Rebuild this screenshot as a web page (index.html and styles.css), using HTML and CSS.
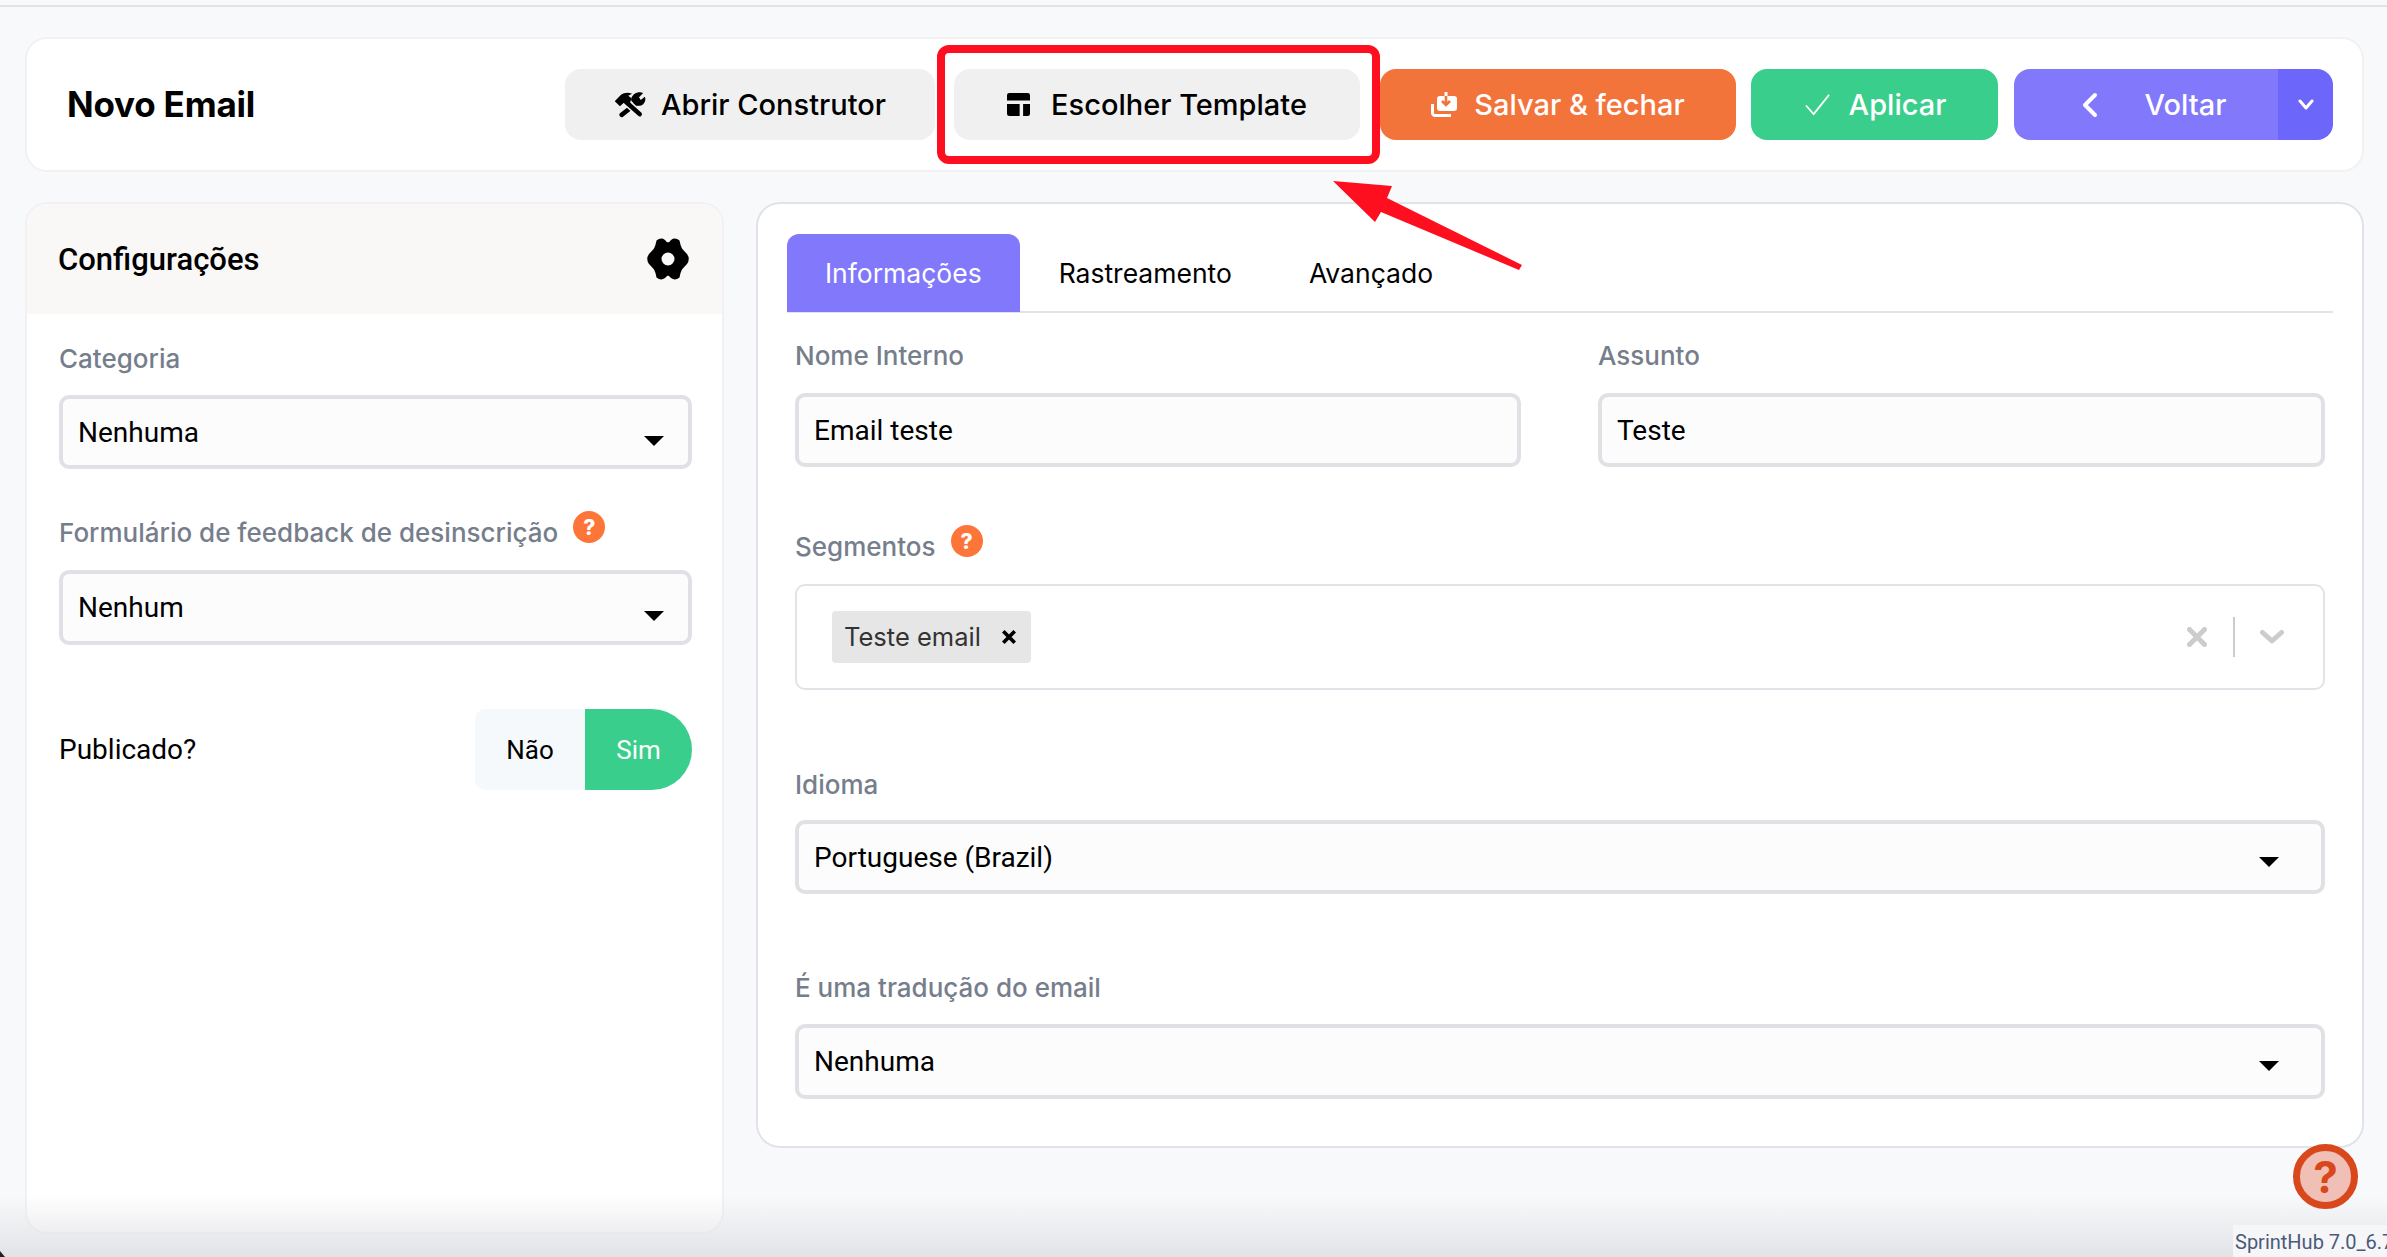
FILE: index.html
```html
<!DOCTYPE html>
<html lang="pt-BR">
<head>
<meta charset="utf-8">
<title>Novo Email</title>
<link rel="stylesheet" href="styles.css">
</head>
<body>
<div class="topline"></div>
<main class="page">
  <header class="head-card">
    <h1 class="page-title">Novo Email</h1>
    <div class="actions">
      <button class="btn btn-grey btn-build">
        <svg class="ico ico-tools" viewBox="0 0 92 75">
          <path class="t-handle-w" d="M70 28 22 66"/>
          <path class="t-head" fill-rule="evenodd" d="M66 2c8-2 13-1 18 1L72 15l5 8 12-9c3 8 1 16-5 21-6 5-14 6-21 3L50 26c-3-9 5-21 16-24z"/>
          <path class="t-gap" d="M34 28 74 64"/>
          <path class="t-handle-h" d="M34 28 74 64"/>
          <path class="t-head" d="M2 27 20 8c8-6 20-8 32-3L41 11l9 7-4 14-12-6-17 15z"/>
        </svg>
        <span>Abrir Construtor</span>
      </button>
      <button class="btn btn-grey btn-template">
        <svg class="ico ico-template" viewBox="2 2 20 20"><path d="M4 2h16a2 2 0 0 1 2 2v4.5H2V4a2 2 0 0 1 2-2z M2 11.5h11V22H4a2 2 0 0 1-2-2z M16 11.5h6V20a2 2 0 0 1-2 2h-4z"/></svg>
        <span>Escolher Template</span>
      </button>
      <button class="btn btn-orange btn-save">
        <svg class="ico ico-save" viewBox="0 0 26 25">
          <rect class="s-tray" x="6" y="4" width="20" height="15" rx="3"/>
          <path class="s-stem" d="M15 0v5"/>
          <path class="s-arrow" d="M15 4v8M11 9l4 4 4-4"/>
          <path class="s-base" d="M1.5 12v9a2.5 2.5 0 0 0 2.5 2.5h16"/>
        </svg>
        <span>Salvar &amp; fechar</span>
      </button>
      <button class="btn btn-green btn-apply">
        <svg class="ico ico-check" viewBox="0 0 26 26"><path d="M1 14l8 9L25 3"/></svg>
        <span>Aplicar</span>
      </button>
      <div class="split">
        <button class="btn btn-purple btn-back">
          <svg class="ico ico-left" viewBox="0 0 16 26"><path d="M13 3 3 13l10 10"/></svg>
          <span>Voltar</span>
        </button>
        <button class="btn-more" aria-label="Mais">
          <svg class="ico ico-down" viewBox="0 0 16 12"><path d="M2 2l6 7 6-7"/></svg>
        </button>
      </div>
    </div>
  </header>

  <div class="columns">
    <aside class="side-card">
      <div class="side-head">
        <h2 class="side-title">Configurações</h2>
        <svg class="ico-gear" viewBox="-21 -21 42 42"><path fill-rule="evenodd" d="M0 -16.500Q1.500 -17 3 -19Q7 -22 11.500 -18.500Q12.500 -13 14 -10.500Q16 -8 19 -5Q22.500 0 19 5Q16 8 14 10.500Q12.500 13 11.500 18.500Q7 22 3 19Q1.500 17 0 16.500Q-1.500 17 -3 19Q-7 22 -11.500 18.500Q-12.500 13 -14 10.500Q-16 8 -19 5Q-22.500 0 -19 -5Q-16 -8 -14 -10.500Q-12.500 -13 -11.500 -18.500Q-7 -22 -3 -19Q-1.500 -17 0 -16.500Z M0 -6.500A6.500 6.500 0 1 0 0 6.500A6.500 6.500 0 1 0 0 -6.500Z"/></svg>
      </div>
      <div class="side-body">
        <label class="label side-l1">Categoria</label>
        <div class="select side-s1"><span>Nenhuma</span><i class="caret"></i></div>
        <label class="label side-l2">Formulário de feedback de desinscrição<b class="hint">?</b></label>
        <div class="select side-s2"><span>Nenhum</span><i class="caret"></i></div>
        <div class="publish">
          <span>Publicado?</span>
          <div class="toggle"><span class="t-no">Não</span><span class="t-yes">Sim</span></div>
        </div>
      </div>
    </aside>

    <section class="main-card">
      <nav class="tabs">
        <a class="tab active">Informações</a>
        <a class="tab">Rastreamento</a>
        <a class="tab">Avançado</a>
      </nav>
      <div class="form">
        <div class="two">
          <div>
            <label class="label">Nome Interno</label>
            <div class="select"><span>Email teste</span></div>
          </div>
          <div>
            <label class="label">Assunto</label>
            <div class="select"><span>Teste</span></div>
          </div>
        </div>
        <label class="label seg-label">Segmentos<b class="hint">?</b></label>
        <div class="multi">
          <div class="chip"><span>Teste email</span>
            <svg class="chip-x" viewBox="0 0 14 14"><path d="M2 2l10 10M12 2 2 12"/></svg>
          </div>
          <div class="multi-tools">
            <svg class="m-x" viewBox="0 0 20 20"><path d="M2.5 2.5l15 15M17.5 2.5l-15 15"/></svg>
            <i class="m-sep"></i>
            <svg class="m-down" viewBox="0 0 24 14"><path d="M2.5 2.5 12 11l9.5-8.500"/></svg>
          </div>
        </div>
        <label class="label lang-label">Idioma</label>
        <div class="select wide lang-select"><span>Portuguese (Brazil)</span><i class="caret"></i></div>
        <label class="label trans-label">É uma tradução do email</label>
        <div class="select wide trans-select"><span>Nenhuma</span><i class="caret"></i></div>
      </div>
    </section>
  </div>
</main>

<div class="fade"></div>
<div class="corner"></div>
<div class="version">SprintHub 7.0_6.7</div>
<div class="help"><span>?</span></div>
<div class="mark-box"></div>
<svg class="mark-arrow" viewBox="0 0 200 100"><path d="M1 1 60 6 55 18 190 85 187 90 49 32 43 42z"/></svg>
</body>
</html>
```
FILE: styles.css
```css
* { box-sizing: border-box; }
html, body { margin: 0; height: 100%; }
body {
  position: relative;
  width: 2387px;
  height: 1257px;
  overflow: hidden;
  background: #f8f9fb;
  font-family: Inter, "Liberation Sans", sans-serif;
  color: #000;
}
.topline { height: 2px; margin-top: 5px; background: #e1e2e6; }
.page { padding: 30px 23px 0 25px; }

.head-card {
  display: flex;
  align-items: center;
  justify-content: space-between;
  height: 135px;
  padding: 0 29px 0 40px;
  background: #fff;
  border: 2px solid #f1f1f3;
  border-radius: 22px;
}
.page-title { margin: 0 0 2px; font-size: 35px; font-weight: 700; letter-spacing: -0.2px; }
.actions { display: flex; align-items: center; }
.btn {
  display: flex;
  align-items: center;
  justify-content: center;
  height: 71px;
  padding: 0;
  border: 0;
  border-radius: 16px;
  font-family: inherit;
  font-size: 29px;
  font-weight: 500;
  color: #fff;
}
.btn-grey { background: #f0f0f0; color: #000; }
.btn-build { width: 370px; gap: 15px; margin-right: 19px; }
.btn-template { width: 406px; gap: 21px; margin-right: 20px; }
.btn-orange { background: #f3743b; }
.btn-save { width: 356px; gap: 17px; margin-right: 15px; }
.btn-green { background: #3ace8c; }
.btn-apply { width: 247px; gap: 19px; padding-left: 2px; margin-right: 16px; }
.split { display: flex; width: 319px; height: 71px; }
.btn-purple { background: #8278fb; }
.btn-back { width: 264px; gap: 47px; padding-left: 16px; border-radius: 16px 0 0 16px; }
.btn-more {
  display: flex;
  align-items: center;
  justify-content: center;
  width: 55px;
  padding: 0;
  border: 0;
  border-radius: 0 16px 16px 0;
  background: #6c66fa;
}
.ico { display: block; flex: none; }
.ico-tools { width: 32px; height: 26px; }
.t-head { fill: #000; }
.t-handle-w { fill: none; stroke: #000; stroke-width: 13; stroke-linecap: round; }
.t-gap { fill: none; stroke: #f0f0f0; stroke-width: 22; }
.t-handle-h { fill: none; stroke: #000; stroke-width: 13; stroke-linecap: round; }
.ico-template { width: 23px; height: 23px; fill: #000; }
.ico-save { width: 26px; height: 25px; }
.s-tray { fill: #fff; }
.s-stem { fill: none; stroke: #fff; stroke-width: 3; }
.s-arrow { fill: none; stroke: #f3743b; stroke-width: 2.6; }
.s-base { fill: none; stroke: #fff; stroke-width: 3; }
.ico-check { width: 25px; height: 25px; fill: none; stroke: #fff; stroke-width: 1.8; }
.ico-left { width: 16px; height: 26px; fill: none; stroke: #fff; stroke-width: 4; stroke-linecap: round; stroke-linejoin: round; }
.ico-down { width: 16px; height: 12px; fill: none; stroke: #fff; stroke-width: 3; stroke-linecap: round; stroke-linejoin: round; }

.columns { display: flex; align-items: flex-start; gap: 32px; margin-top: 30px; }
.side-card {
  width: 699px;
  height: 1032px;
  background: #fff;
  border: 2px solid #f1f1f3;
  border-radius: 22px;
  overflow: hidden;
}
.side-head {
  display: flex;
  align-items: center;
  justify-content: space-between;
  height: 110px;
  padding: 0 33px 0 31px;
  background: #f9f8f7;
}
.side-title { margin: 0; font-family: Roboto, sans-serif; font-size: 31px; font-weight: 500; }
.ico-gear { width: 42px; height: 42px; fill: #000; }
.side-body { padding: 28px 30px 0 32px; }

.label {
  display: flex;
  align-items: center;
  height: 34px;
  font-size: 26px;
  line-height: 34px;
  font-weight: 500;
  color: #767e8c;
}
.hint {
  display: flex;
  align-items: center;
  justify-content: center;
  width: 32px;
  height: 32px;
  margin: -12px 0 0 15px;
  border-radius: 50%;
  background: #fd7539;
  color: #fff;
  font-size: 21px;
  font-weight: 800;
  line-height: 1;
}
.select {
  position: relative;
  display: flex;
  align-items: center;
  height: 74px;
  margin-top: 20px;
  padding: 0 15px;
  background: #fcfcfc;
  border: 4px solid #e0e1e5;
  border-radius: 10px;
  font-family: Roboto, sans-serif;
  font-size: 28px;
}
.caret {
  position: absolute;
  right: 24px;
  top: 37px;
  width: 0;
  height: 0;
  border-left: 10px solid transparent;
  border-right: 10px solid transparent;
  border-top: 10px solid #000;
}
.side-s1 { margin-top: 19px; }
.side-l2 { margin-top: 47px; }
.side-s2 { height: 75px; }
.publish {
  display: flex;
  align-items: center;
  justify-content: space-between;
  margin-top: 64px;
  font-family: Roboto, sans-serif;
  font-size: 28px;
}
.toggle { display: flex; height: 81px; font-size: 26px; }
.t-no, .t-yes { display: flex; align-items: center; justify-content: center; }
.t-no { width: 110px; background: #f6f9fc; border-radius: 10px 0 0 10px; }
.t-yes { width: 107px; background: #3ace8c; color: #fff; border-radius: 0 41px 41px 0; }

.main-card {
  width: 1608px;
  height: 946px;
  padding: 30px 29px 0 29px;
  background: #fff;
  border: 2px solid #e2e3e8;
  border-radius: 24px;
}
.tabs { display: flex; height: 79px; border-bottom: 2px solid #e2e3e8; }
.tab {
  display: flex;
  align-items: center;
  justify-content: center;
  padding: 0 38px;
  margin-right: 1px;
  height: 78px;
  font-size: 26.5px;
  border-radius: 12px 12px 0 0;
}
.tab.active { background: #8278fb; color: #fff; }
.form { padding: 26px 8px 0 8px; }
.two { display: grid; grid-template-columns: 726px 727px; gap: 77px; }
.seg-label { margin-top: 63px; }
.multi {
  display: flex;
  align-items: center;
  justify-content: space-between;
  height: 106px;
  margin-top: 20px;
  padding: 0 39px 0 35px;
  border: 2px solid #e2e3e8;
  border-radius: 10px;
}
.chip {
  display: flex;
  align-items: center;
  justify-content: space-between;
  width: 199px;
  height: 52px;
  padding: 0 14px 2px 12px;
  background: #e6e6e6;
  border-radius: 4px;
  font-size: 25.500px;
  color: #333;
}
.chip-x { width: 16px; height: 16px; margin-top: 2px; fill: none; stroke: #000; stroke-width: 3.2; }
.multi-tools { display: flex; align-items: center; }
.m-x { width: 20px; height: 20px; fill: none; stroke: #ccc; stroke-width: 5; stroke-linecap: round; }
.m-sep { width: 2px; height: 40px; margin: 0 25px 0 26px; background: #ccc; }
.m-down { width: 24px; height: 14px; fill: none; stroke: #ccc; stroke-width: 5; stroke-linecap: round; stroke-linejoin: round; }
.lang-label { margin-top: 78px; }
.lang-select { margin-top: 18px; }
.trans-label { margin-top: 77px; }
.trans-select { margin-top: 19px; height: 75px; }
.wide .caret { right: 42px; top: 33px; }

.fade {
  position: absolute;
  left: 0;
  right: 0;
  bottom: 0;
  height: 62px;
  background: linear-gradient(to bottom, rgba(225,226,229,0), rgba(225,226,229,.95));
  pointer-events: none;
}
.corner {
  position: absolute;
  left: 0;
  bottom: 0;
  border-left: 5px solid #222;
  border-top: 6px solid transparent;
}
.version {
  position: absolute;
  left: 2233px;
  top: 1225px;
  width: 154px;
  height: 32px;
  padding-left: 2px;
  overflow: hidden;
  white-space: nowrap;
  font-family: Roboto, sans-serif;
  font-size: 20px;
  line-height: 34px;
  color: #4b5a7a;
  background: #f6f6f8;
}
.help {
  position: absolute;
  left: 2293px;
  top: 1144px;
  display: flex;
  align-items: center;
  justify-content: center;
  width: 65px;
  height: 65px;
  border: 7px solid #d9481c;
  border-radius: 50%;
  background: #f0c0b7;
  color: #d9481c;
  font-size: 44px;
  font-weight: 700;
  line-height: 1;
}
.mark-box {
  position: absolute;
  left: 937px;
  top: 45px;
  width: 443px;
  height: 119px;
  border: 8px solid #fe0f1f;
  border-radius: 12px;
}
.mark-arrow {
  position: absolute;
  left: 1332px;
  top: 180px;
  width: 200px;
  height: 100px;
  fill: #fe0f1f;
}
```
